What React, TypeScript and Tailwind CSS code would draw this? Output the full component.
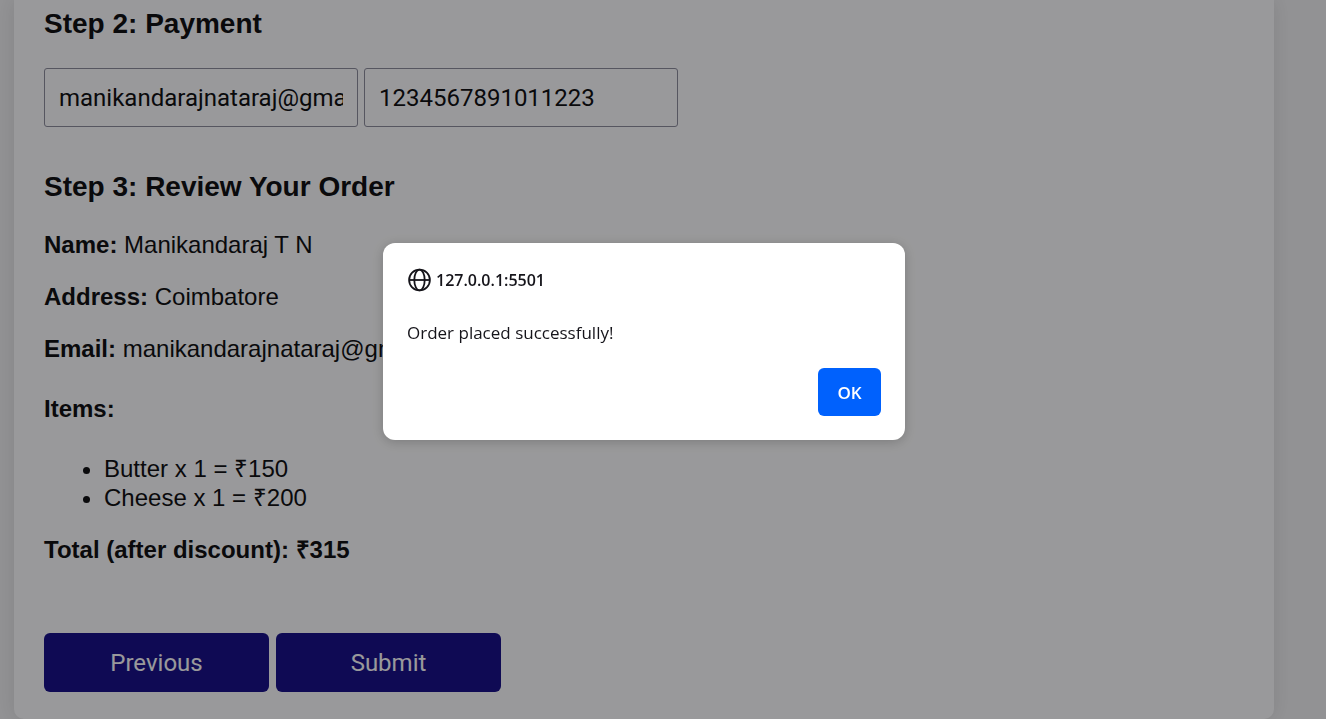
import { useState } from "react";

const items = [
  { name: "Butter", qty: 1, total: 150 },
  { name: "Cheese", qty: 1, total: 200 },
];

const controlFont = "font-[Roboto,sans-serif] text-2xl";
const fieldStyle =
  "h-[59px] w-[314px] rounded-[3px] border border-[#8f8f9d] bg-white px-[14px] text-[#111]";
const buttonStyle =
  "h-[59px] w-[225px] rounded-[6px] bg-[#191289] text-center text-white";

function GlobeIcon() {
  return (
    <svg
      viewBox="0 0 24 24"
      className="h-6 w-6 shrink-0"
      fill="none"
      stroke="currentColor"
      strokeWidth="1.8"
      aria-hidden="true"
    >
      <circle cx="12.5" cy="12" r="10.4" />
      <ellipse cx="12.5" cy="12" rx="5.2" ry="10.4" />
      <path d="M2.1 12h20.8" />
    </svg>
  );
}

function Detail({ label, value }: { label: string; value: string }) {
  return (
    <p>
      <strong>{label}:</strong> {value}
    </p>
  );
}

function AlertDialog({ onClose }: { onClose: () => void }) {
  return (
    <div className="fixed inset-0 flex items-start justify-center bg-[#000005]/40 pt-[243px] pr-[38px]">
      <div
        role="alertdialog"
        aria-modal="true"
        aria-labelledby="alert-origin"
        aria-describedby="alert-message"
        className="flex w-[522px] flex-col rounded-xl bg-white p-6 font-['Open_Sans',sans-serif] text-[17px] leading-6 text-[#15141a] shadow-[0_2px_12px_rgba(0,0,0,0.2)]"
      >
        <h2 id="alert-origin" className="flex items-center gap-[5px] pt-px text-base font-semibold">
          <GlobeIcon />
          127.0.0.1:5501
        </h2>
        <p id="alert-message" className="mt-[29px]">
          Order placed successfully!
        </p>
        <button
          type="button"
          onClick={onClose}
          className="mt-[23px] h-12 w-[63px] self-end rounded-[6px] bg-[#0061fd] pt-px font-semibold text-white"
        >
          OK
        </button>
      </div>
    </div>
  );
}

export default function App() {
  const [open, setOpen] = useState(true);

  return (
    <div className="min-h-screen bg-[#f4f4f4] pr-[52px] pl-[14px] font-['Liberation_Sans',Arial,sans-serif] text-2xl leading-7 text-[#111]">
      <form
        onSubmit={(event) => {
          event.preventDefault();
          setOpen(true);
        }}
        className="rounded-b-[10px] bg-white px-[30px] pt-2 pb-[27px] shadow-[0_0_20px_rgba(0,0,0,0.1)]"
      >
        <section>
          <h2 className="text-[28px] leading-8 font-bold">Step 2: Payment</h2>
          <div className="mt-7 flex gap-[6px]">
            <input
              type="email"
              aria-label="Email"
              defaultValue="manikandarajnataraj@gmail.com"
              className={`${fieldStyle} ${controlFont}`}
            />
            <input
              type="text"
              aria-label="Card number"
              defaultValue="1234567891011223"
              className={`${fieldStyle} ${controlFont}`}
            />
          </div>
        </section>

        <section className="mt-11">
          <h2 className="text-[28px] leading-8 font-bold">Step 3: Review Your Order</h2>
          <div className="mt-7 flex flex-col gap-6">
            <Detail label="Name" value="Manikandaraj T N" />
            <Detail label="Address" value="Coimbatore" />
            <Detail label="Email" value="manikandarajnataraj@gmail.com" />
          </div>
          <h3 className="mt-8 font-bold">Items:</h3>
          <ul className="mt-[31px] list-disc pl-[60px] leading-[29px]">
            {items.map((item) => (
              <li key={item.name}>
                {item.name} x {item.qty} = ₹{item.total}
              </li>
            ))}
          </ul>
          <p className="mt-6 font-bold">Total (after discount): ₹315</p>
        </section>

        <div className="mt-[69px] flex gap-[7px]">
          <button type="button" className={`${buttonStyle} ${controlFont}`}>
            Previous
          </button>
          <button type="submit" className={`${buttonStyle} ${controlFont}`}>
            Submit
          </button>
        </div>
      </form>
      {open && <AlertDialog onClose={() => setOpen(false)} />}
    </div>
  );
}
